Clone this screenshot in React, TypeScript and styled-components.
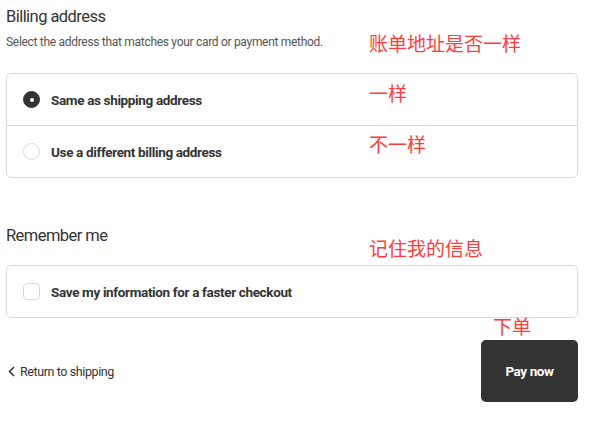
import React from "react";
import styled, { createGlobalStyle } from "styled-components";

const Global = createGlobalStyle`
  html, body { margin: 0; padding: 0; background: #fff; }
  body {
    font-family: Roboto, "Liberation Sans", sans-serif;
    color: #333;
  }
`;

const Page = styled.div`
  position: relative;
  width: 572px;
  padding: 5px 0 0 6px;
  display: flex;
  flex-direction: column;
`;

const Section = styled.section<{ $gap?: number }>`
  display: flex;
  flex-direction: column;
  margin-bottom: ${(p) => p.$gap ?? 0}px;
`;

const Heading = styled.h2`
  margin: 0;
  font-size: 16.5px;
  font-weight: 400;
  line-height: 24px;
  letter-spacing: -0.55px;
  color: #333;
`;

const Sub = styled.p`
  margin: 4px 0 0;
  font-size: 12px;
  line-height: 18px;
  letter-spacing: -0.3px;
  color: #555;
`;

const Card = styled.div<{ $top: number }>`
  margin-top: ${(p) => p.$top}px;
  border: 1px solid #d9d9d9;
  border-radius: 5px;
  overflow: hidden;
  display: flex;
  flex-direction: column;
`;

const Row = styled.label<{ $divider?: boolean }>`
  display: flex;
  align-items: center;
  gap: 11px;
  height: 51px;
  padding: 0 16px;
  border-top: ${(p) => (p.$divider ? "1px solid #d9d9d9" : "none")};
  font-size: 13.5px;
  font-weight: 700;
  letter-spacing: -0.35px;
  color: #333;
`;

const Radio = styled.span<{ $checked?: boolean }>`
  width: 17px;
  height: 17px;
  border-radius: 50%;
  box-sizing: border-box;
  flex: none;
  display: flex;
  align-items: center;
  justify-content: center;
  background: ${(p) => (p.$checked ? "#333" : "#fff")};
  border: 1px solid ${(p) => (p.$checked ? "#333" : "#d9d9d9")};
  &::after {
    content: "";
    width: 4px;
    height: 4px;
    border-radius: 50%;
    background: #fff;
    display: ${(p) => (p.$checked ? "block" : "none")};
  }
`;

const Check = styled.span`
  width: 17px;
  height: 17px;
  border-radius: 4px;
  box-sizing: border-box;
  border: 1px solid #d9d9d9;
  flex: none;
`;

const Footer = styled.div`
  display: flex;
  align-items: center;
  justify-content: space-between;
  margin-top: 22px;
`;

const Back = styled.a`
  display: flex;
  align-items: center;
  gap: 5px;
  font-size: 12.5px;
  letter-spacing: -0.4px;
  color: #333;
  text-decoration: none;
  margin-left: 2px;
`;

const PayButton = styled.button`
  width: 97px;
  height: 62px;
  border: none;
  border-radius: 5px;
  background: #333;
  color: #fff;
  font-family: inherit;
  font-size: 13.5px;
  font-weight: 700;
  letter-spacing: -0.4px;
`;

const Note = styled.span<{ $x: number; $y: number }>`
  position: absolute;
  left: ${(p) => p.$x}px;
  top: ${(p) => p.$y}px;
  font-family: "Noto Sans CJK SC", sans-serif;
  font-size: 19px;
  line-height: 20px;
  color: #ff3b3b;
  white-space: nowrap;
`;

export default function App() {
  return (
    <>
      <Global />
      <Page>
        <Section $gap={46}>
          <Heading>Billing address</Heading>
          <Sub>Select the address that matches your card or payment method.</Sub>
          <Card $top={22}>
            <Row>
              <Radio $checked />
              Same as shipping address
            </Row>
            <Row $divider>
              <Radio />
              Use a different billing address
            </Row>
          </Card>
        </Section>
        <Section>
          <Heading>Remember me</Heading>
          <Card $top={17}>
            <Row>
              <Check />
              Save my information for a faster checkout
            </Row>
          </Card>
        </Section>
        <Footer>
          <Back href="#">
            <svg width="7" height="11" viewBox="0 0 7 11">
              <path d="M6 1 L1.5 5.5 L6 10" fill="none" stroke="#333" strokeWidth="1.5" />
            </svg>
            Return to shipping
          </Back>
          <PayButton>Pay now</PayButton>
        </Footer>
        <Note $x={369} $y={33}>账单地址是否一样</Note>
        <Note $x={369} $y={83}>一样</Note>
        <Note $x={369} $y={134}>不一样</Note>
        <Note $x={369} $y={238}>记住我的信息</Note>
        <Note $x={493} $y={316}>下单</Note>
      </Page>
    </>
  );
}
